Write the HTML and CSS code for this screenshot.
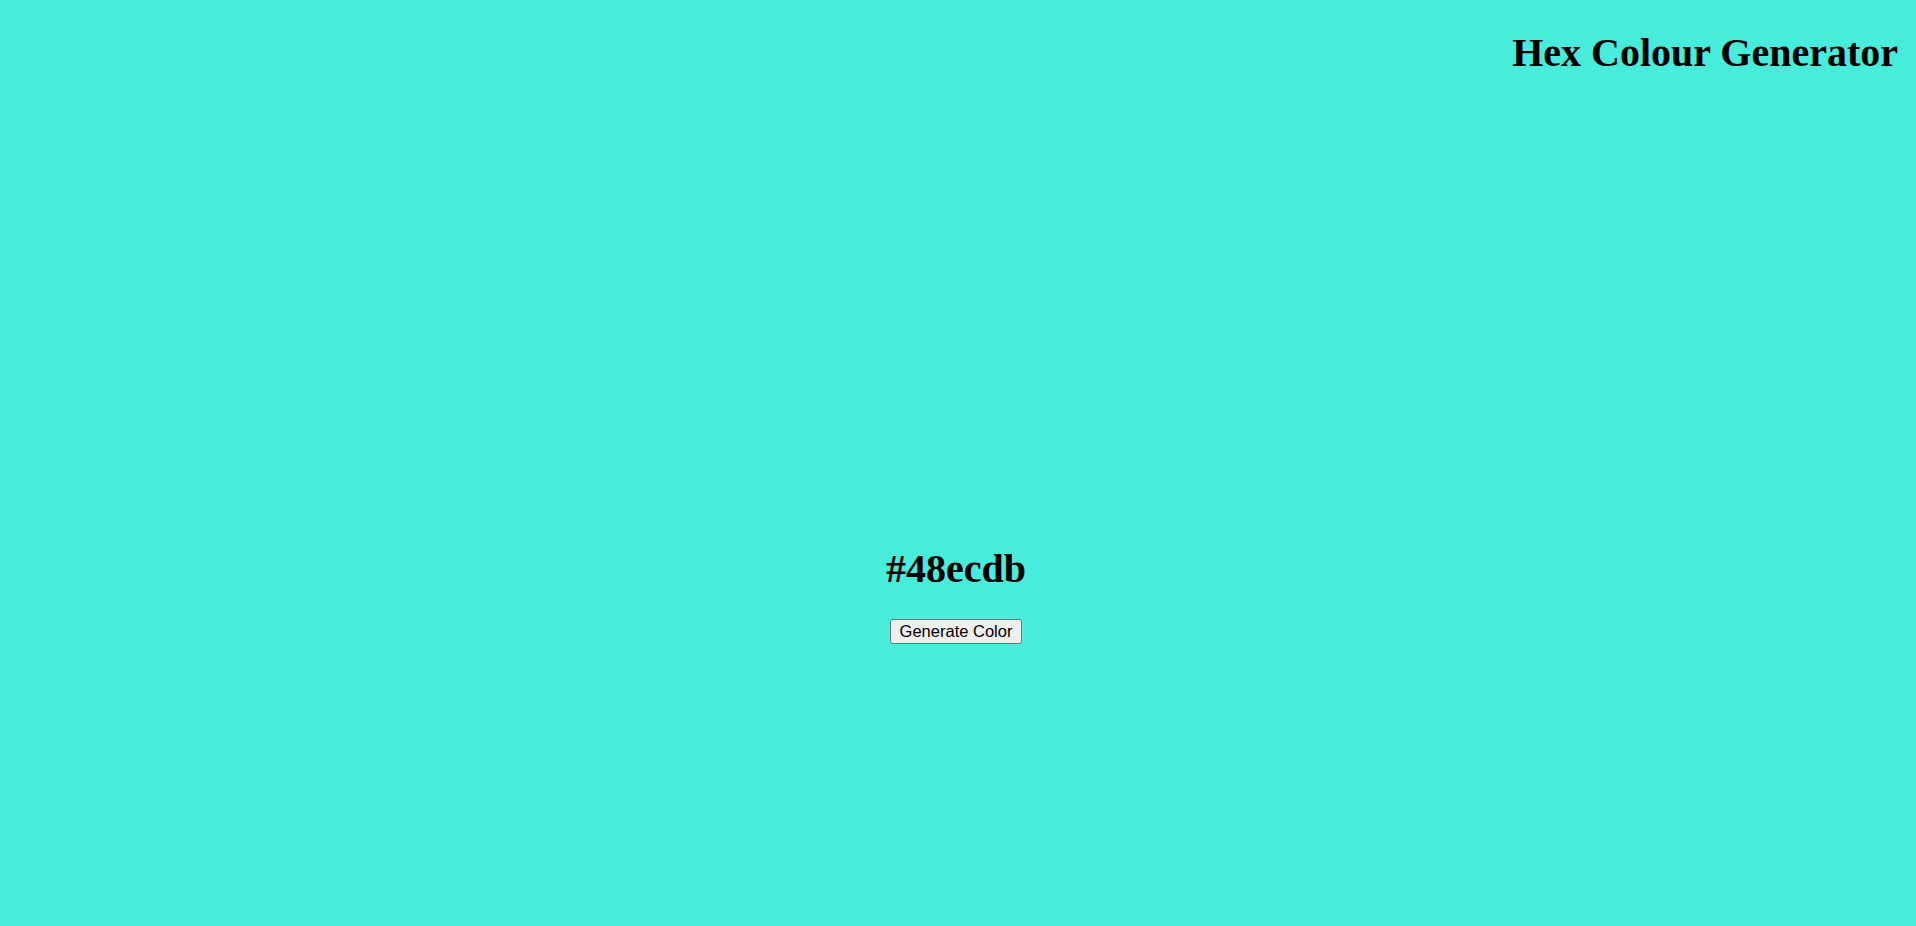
FILE: index.html
```html
<!DOCTYPE html>
<html lang="en">
<head>
<meta charset="utf-8">
<title>Hex Colour Generator</title>
<link rel="stylesheet" href="styles.css">
</head>
<body>
<header class="top">
  <h1 class="title">Hex Colour Generator</h1>
</header>
<main class="stage">
  <h1 class="hex">#48ecdb</h1>
  <button class="gen" type="button">Generate Color</button>
</main>
</body>
</html>
```

FILE: styles.css
```css
html, body {
  margin: 0;
  padding: 0;
}
body {
  background: #48ecdb;
  font-family: "Liberation Serif", "Times New Roman", serif;
  color: #000;
}
.top {
  display: flex;
  justify-content: flex-end;
  padding: 30px 18px 0 0;
}
.title {
  margin: 0;
  font-size: 40px;
  line-height: 46px;
  font-weight: bold;
}
.stage {
  display: flex;
  flex-direction: column;
  align-items: center;
  margin-top: 470px;
  padding-right: 4px;
}
.hex {
  margin: 0;
  font-size: 40px;
  line-height: 46px;
  font-weight: bold;
}
.gen {
  margin-top: 27px;
  padding: 2px 9px;
  font-family: "Liberation Sans", Arial, sans-serif;
  font-size: 16.5px;
  line-height: 19px;
  color: #000;
  background: #efefef;
  border: 1px solid #767676;
  border-radius: 3px;
}
```
